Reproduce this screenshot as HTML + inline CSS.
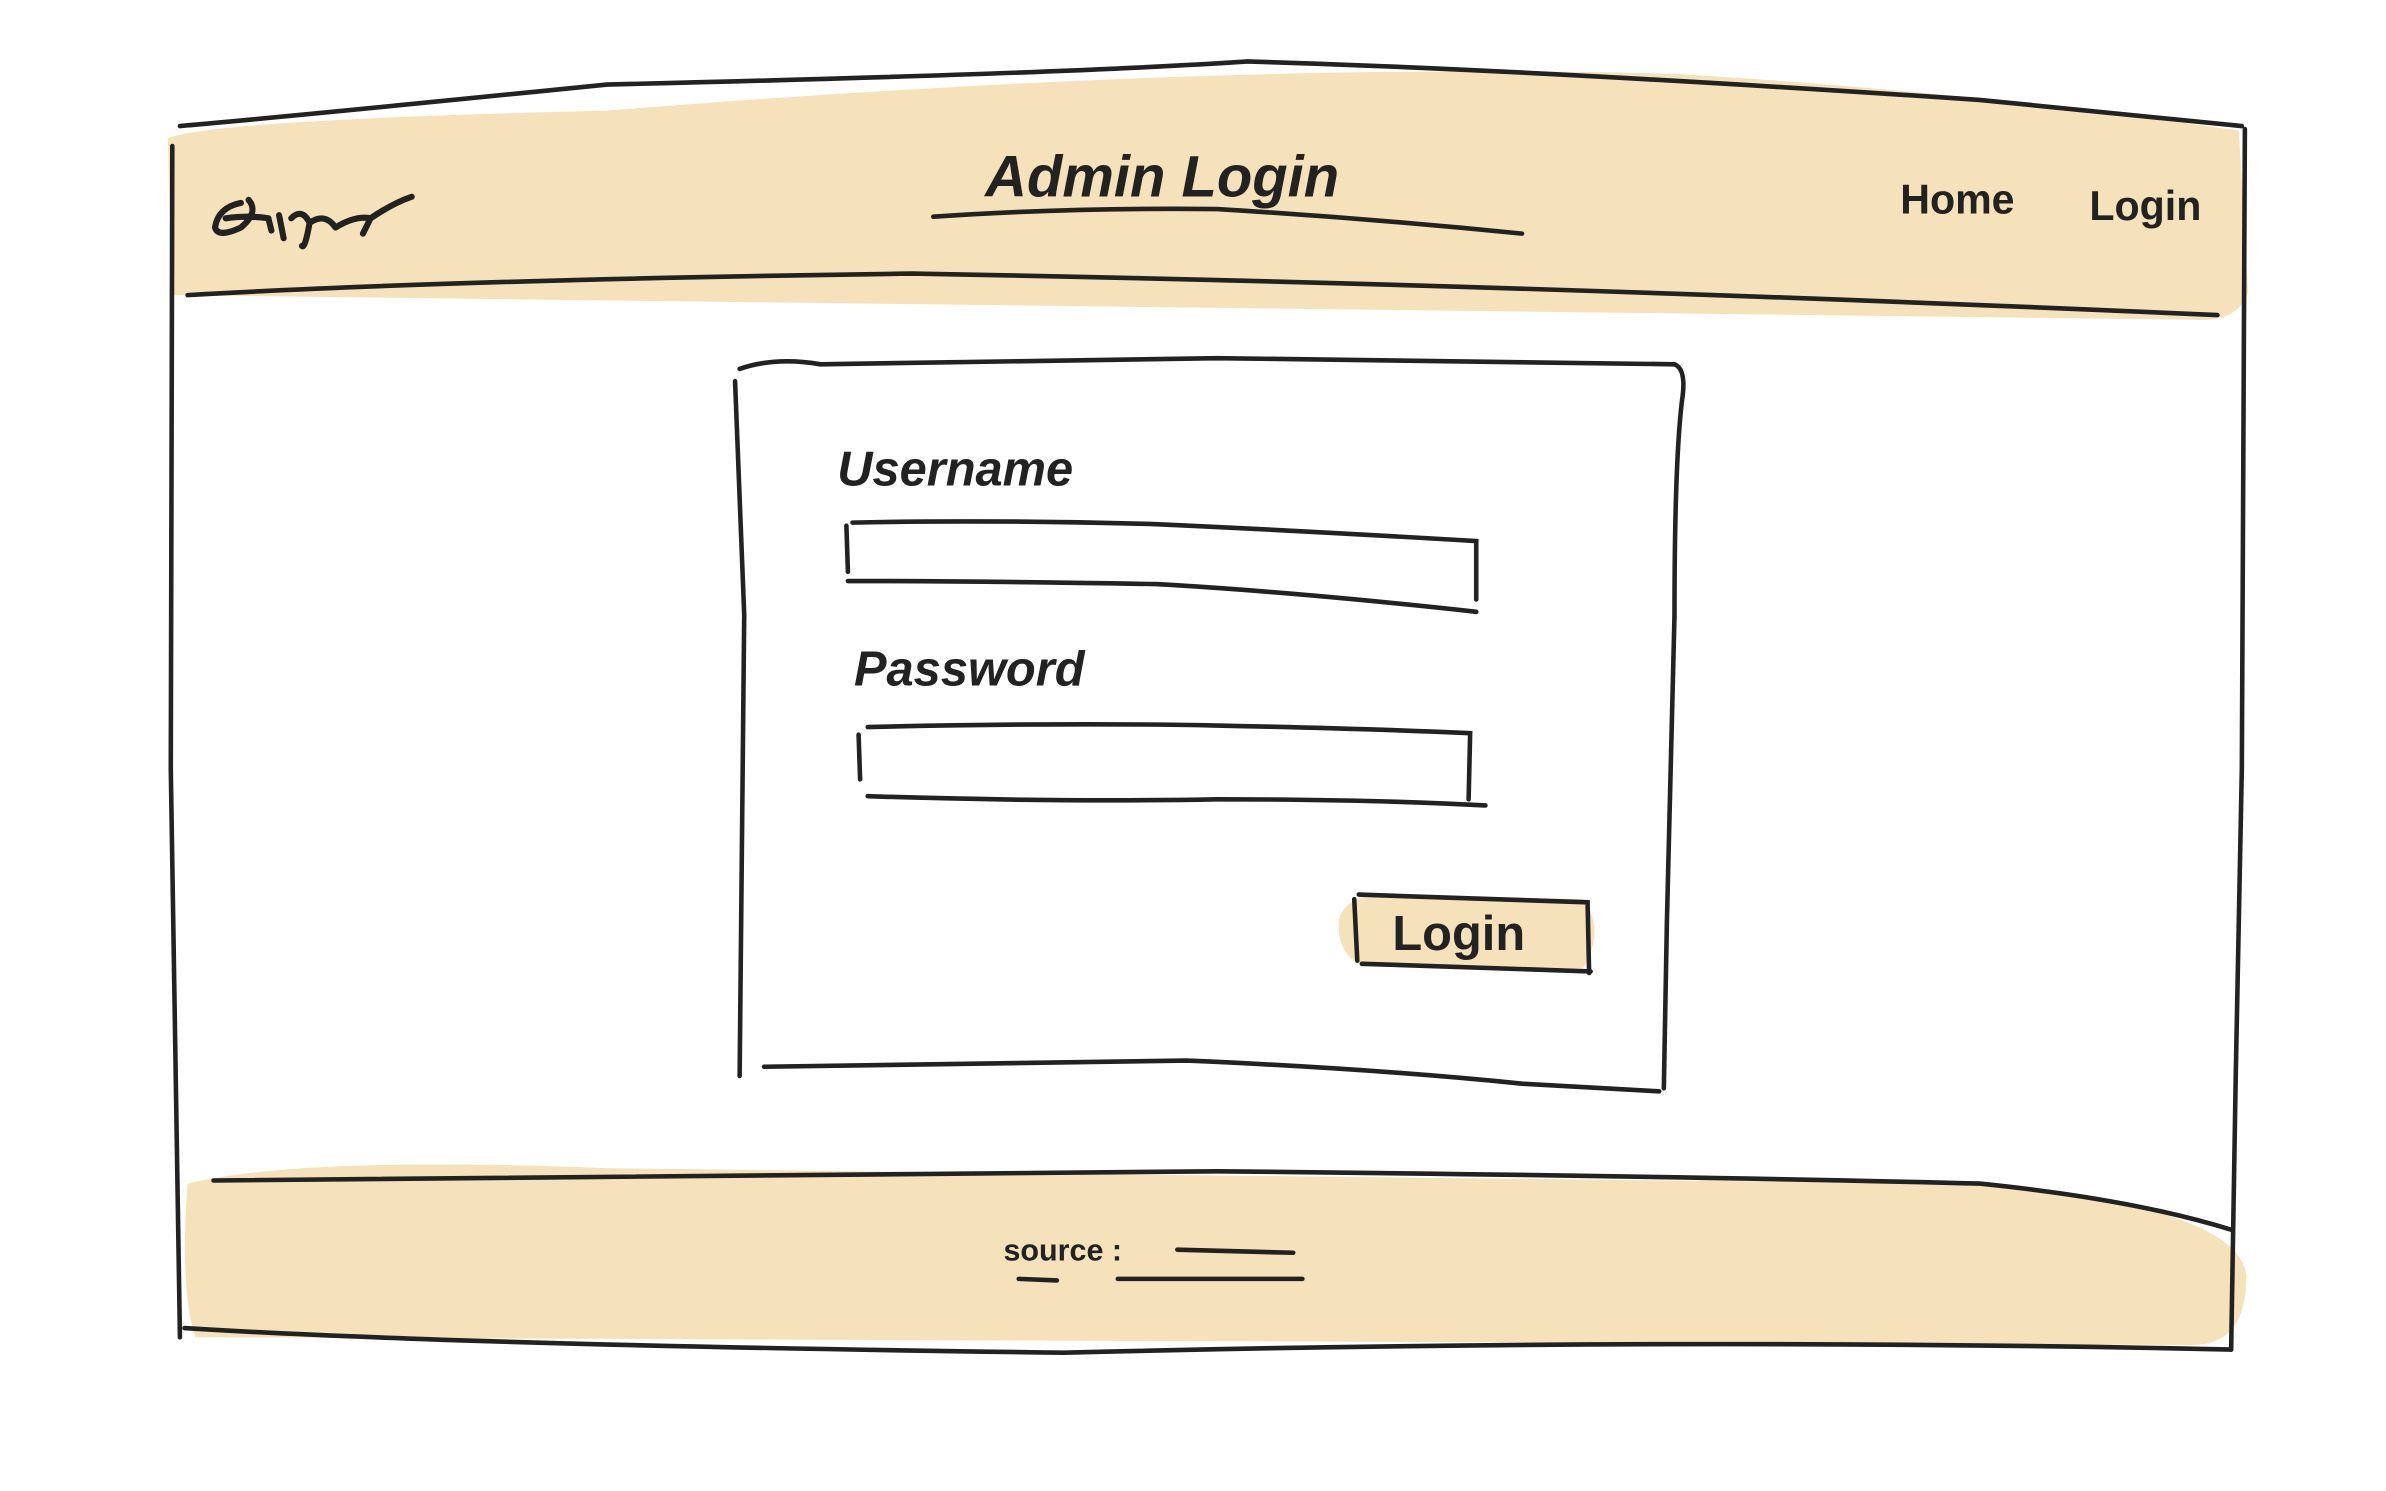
<!DOCTYPE html>
<html><head><style>html,body{margin:0;padding:0;background:#fff;width:2386px;height:1491px;overflow:hidden}svg{display:block}
text{font-family:"Liberation Sans",sans-serif;fill:#222;font-weight:bold}</style></head><body>
<svg width="2386" height="1491" viewBox="0 0 1552 970" preserveAspectRatio="none">
<g transform="matrix(0.992 0 0 1 -2 0)">
<path d="M112 90 Q140 78 400 72 Q800 40 1100 48 Q1300 60 1470 85 L1476 190 Q1470 210 1440 208 L115 192 Z" fill="#f5e2bb"/>
<path d="M125 770 Q200 752 400 760 Q800 765 1300 770 Q1470 785 1475 830 Q1475 875 1440 875 L130 870 Q120 840 125 770 Z" fill="#f5e2bb"/>
<path d="M880 598 Q885 580 920 582 L1040 585 Q1055 605 1040 630 L895 628 Q878 620 880 598Z" fill="#f5e2bb"/>
<g fill="none" stroke="#222" stroke-width="3" stroke-linecap="round">
<path d="M120 82 Q200 75 400 55 Q700 48 820 40 Q1000 45 1300 65 L1472 82"/>
<path d="M115 95 L114 500 L120 870"/>
<path d="M1474 84 L1472 500 L1468 700 L1465 878"/>
<path d="M125 192 Q300 182 600 178 Q1000 185 1456 205"/>
<path d="M142 768 Q500 765 800 762 Q1100 765 1300 770 Q1400 780 1465 800"/>
<path d="M123 864 Q300 875 700 880 Q1100 870 1465 878"/>
<path d="M614 141 Q700 135 800 136 Q900 142 1000 152"/>
<path d="M487 240 Q510 232 540 237 L800 233 L1100 237 Q1108 240 1105 260 Q1100 300 1100 400 L1095 600 L1093 708"/>
<path d="M484 248 L490 400 L487 700"/>
<path d="M503 694 Q600 692 780 690 Q900 695 1000 705 L1090 710"/>
<path d="M557 342 L558 372"/><path d="M561 340 Q650 338 760 341 Q850 345 970 352 L970 390"/>
<path d="M558 378 Q650 378 760 380 Q850 385 970 398"/>
<path d="M565 478 L566 507"/><path d="M571 473 Q700 470 800 472 Q900 474 966 477 L965 520"/>
<path d="M571 518 Q700 522 800 520 Q900 520 976 524"/>
<path d="M890 585 L892 625"/><path d="M893 582 L1043 587 L1044 633"/><path d="M895 627 L1045 632"/>
<path d="M774 813 L850 815"/><path d="M670 832 L695 833"/><path d="M735 832 L856 832"/>
</g>
<path d="M160 132 Q145 135 143 148 Q145 155 160 148 Q172 138 165 130 M150 142 Q165 140 178 142 L180 150 M185 140 L188 155 M193 142 Q200 135 205 145 Q202 162 200 160 M205 145 Q215 138 222 148 Q235 140 245 142 L240 152 M245 142 Q260 132 272 128" fill="none" stroke="#222" stroke-width="4" stroke-linecap="round" stroke-linejoin="round"/>
<text x="648" y="128" font-size="38" font-style="italic">Admin  Login</text>
<text x="1248" y="139" font-size="27">Home</text>
<text x="1372" y="143" font-size="27">Login</text>
<text x="551" y="316" font-size="32" font-weight="normal" font-style="italic">Username</text>
<text x="562" y="446" font-size="32" font-weight="normal" font-style="italic">Password</text>
<text x="915" y="618" font-size="32" font-weight="normal">Login</text>
<text x="660" y="820" font-size="20">source :</text>
</g>
</svg></body></html>
